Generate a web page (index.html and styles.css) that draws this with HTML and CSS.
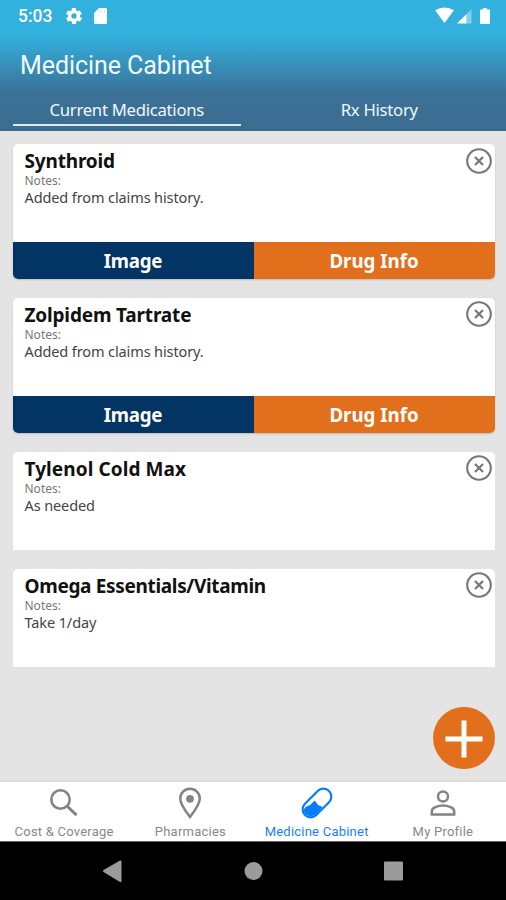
FILE: index.html
```
<!DOCTYPE html>
<html lang="en">
<head>
<meta charset="utf-8">
<title>Medicine Cabinet</title>
<link rel="stylesheet" href="styles.css">
</head>
<body>
<svg class="defs" width="0" height="0">
  <symbol id="close" viewBox="0 0 26 26"><circle cx="13" cy="13" r="11.800" fill="none" stroke="#777" stroke-width="2.100"/><path d="M9 9l8 8M17 9l-8 8" stroke="#777" stroke-width="2.200"/></symbol>
</svg>
<div class="screen">
  <header class="header">
    <div class="status">
      <span class="time">5:03</span>
      <svg class="gear" viewBox="2 2 20 20"><path fill="#fff" d="M19.4 13c0-.3.1-.6.1-1s0-.7-.1-1l2.1-1.600c.2-.2.2-.4.1-.6l-2-3.500c-.1-.2-.4-.3-.6-.2l-2.500 1c-.5-.4-1.100-.7-1.700-1l-.4-2.600c0-.3-.2-.5-.5-.5h-4c-.2 0-.5.2-.5.400l-.4 2.700c-.6.2-1.100.6-1.700 1l-2.500-1c-.2-.1-.5 0-.6.2l-2 3.500c-.1.2-.1.5.1.600L4.600 11c0 .3-.1.700-.1 1s0 .7.1 1l-2.100 1.700c-.2.2-.2.400-.1.600l2 3.500c.1.2.4.3.6.2l2.500-1c.5.4 1.100.7 1.700 1l.4 2.600c0 .2.200.4.500.4h4c.2 0 .5-.2.500-.4l.4-2.700c.6-.2 1.100-.6 1.700-1l2.500 1c.2.1.5 0 .6-.2l2-3.500c.1-.2.1-.5-.1-.6L19.400 13zM12 15.300a3.300 3.300 0 1 1 0-6.600 3.300 3.300 0 0 1 0 6.600z"/></svg>
      <svg class="sd" viewBox="0 0 13 16"><path fill="#fff" d="M5 0h6.500Q13 0 13 1.500v13q0 1.500-1.500 1.500h-10Q0 16 0 14.500V5z"/><path d="M5.500 2v2.500M8 2v2.500M10.500 2v2.500" stroke="#c2eaf6" stroke-width="1"/></svg>
      <svg class="signals" viewBox="0 0 57 18"><path fill="#fff" d="M0 3.200Q9.500-2.200 19 3.200L9.500 16z"/><path fill="#fff" d="M22 16.500 31.500 7v9.500z"/><path fill="#fff" opacity=".4" d="M31.500 7 36.500 2v14.500h-5z"/><path fill="#fff" d="M48 1h4v1.500h2q1 0 1 1V16q0 1-1 1h-8q-1 0-1-1V3.500q0-1 1-1h2z"/></svg>
    </div>
    <h1 class="title"><span>Medicine Cabinet</span></h1>
    <nav class="tabs">
      <div class="tab active"><span>Current Medications</span></div>
      <div class="tab"><span>Rx History</span></div>
    </nav>
  </header>
  <main class="list">
    <article class="card">
      <div class="info"><h2>Synthroid</h2><p class="label">Notes:</p><p class="note">Added from claims history.</p><svg class="close"><use href="#close"/></svg></div>
      <div class="actions"><div class="image">Image</div><div class="drug">Drug Info</div></div>
    </article>
    <article class="card">
      <div class="info"><h2>Zolpidem Tartrate</h2><p class="label">Notes:</p><p class="note">Added from claims history.</p><svg class="close"><use href="#close"/></svg></div>
      <div class="actions"><div class="image">Image</div><div class="drug">Drug Info</div></div>
    </article>
    <article class="card plain">
      <div class="info"><h2 class="wide">Tylenol Cold Max</h2><p class="label">Notes:</p><p class="note">As needed</p><svg class="close"><use href="#close"/></svg></div>
    </article>
    <article class="card plain">
      <div class="info"><h2 class="tight">Omega Essentials/Vitamin</h2><p class="label">Notes:</p><p class="note">Take 1/day</p><svg class="close"><use href="#close"/></svg></div>
    </article>
    <svg class="fab" viewBox="0 0 62 62"><circle cx="31" cy="31" r="31" fill="#e26f1b"/><path d="M12.500 32h37M31 13.500v37" stroke="#fff" stroke-width="5"/></svg>
  </main>
  <nav class="bottom">
    <div class="item"><svg viewBox="0 0 34 34"><g fill="none" stroke="#848484"><circle cx="13.500" cy="13.500" r="9.200" stroke-width="2.600"/><path d="M20.500 20.500l9 8.700" stroke-width="3"/></g></svg><span>Cost &amp; Coverage</span></div>
    <div class="item"><svg viewBox="0 0 34 34"><path fill="none" stroke="#848484" stroke-width="2.500" d="M17 31C12.500 25 7.200 18.500 7.200 12.500a9.800 9.800 0 0 1 19.600 0C26.800 18.500 21.500 25 17 31z"/><circle cx="17" cy="12.800" r="3.900" fill="#848484"/></svg><span>Pharmacies</span></div>
    <div class="item selected"><svg viewBox="0 0 34 34"><rect x="9" y="0" width="16" height="34" rx="8" fill="#fff" stroke="#087cf8" stroke-width="2.200" transform="rotate(45 17 17)"/><path fill="#087cf8" d="M6 20.800l4-1.800 4.800-4.500 3.200 4.500 4.500 2-5.200 6.300A8 8 0 0 1 5.500 28C2.800 25 4 22 6 20.800z"/></svg><span>Medicine Cabinet</span></div>
    <div class="item"><svg viewBox="0 0 34 34"><g fill="none" stroke="#848484" stroke-width="2.500"><circle cx="17" cy="10.500" r="5"/><path d="M5.800 28.500v-3.300C5.800 21.500 13 19.500 17 19.500s11.200 2 11.200 5.700v3.300z"/></g></svg><span>My Profile</span></div>
  </nav>
  <footer class="system">
    <svg viewBox="0 0 506 58"><g fill="#9b9b9b"><path d="M103.500 28q-1 1 0 2l16.500 10q1.500.5 1.500-1V19.500q0-1.500-1.500-1z"/><circle cx="253.500" cy="29" r="9"/><rect x="384" y="19.500" width="19" height="19" rx="1"/></g></svg>
  </footer>
</div>
</body>
</html>
```
FILE: styles.css
```
* { box-sizing: border-box; }
body, h1, h2, p { margin: 0; }
body { font-family: "Noto Sans", "Open Sans", sans-serif; background: #e4e4e4; }
.defs { position: absolute; }
.screen { display: flex; flex-direction: column; width: 506px; height: 900px; overflow: hidden; }
.header { height: 131px; color: #eefaff; background: linear-gradient(#32b0de 0, #32b0de 36px, #3793bd 62px, #3c7096 94px, #3b6d91 130px); }
.status { display: flex; align-items: center; height: 32px; padding: 0 14px 0 18px; }
.time { width: 48px; font: 500 17.500px/32px Roboto, sans-serif; color: #fff; }
.gear { width: 16px; height: 16px; }
.sd { width: 13px; height: 16px; margin-left: 12px; }
.signals { width: 57px; height: 18px; margin-left: auto; }
.title { height: 64px; padding: 1px 0 0 20px; font: 400 25px/66px Roboto, sans-serif; letter-spacing: -0.080px; }
.tabs { display: grid; grid-template-columns: 1fr 1fr; height: 35px; padding-left: 13px; padding-right: 13px; column-gap: 25px; }
.tab { height: 30px; font-size: 16.700px; line-height: 28px; letter-spacing: -0.270px; text-align: center; }
.active { border-bottom: 2px solid #d8e9f2; }
.list { position: relative; display: flex; flex-direction: column; gap: 19px; height: 651px; padding: 13px 11.500px 0 12.500px; border-bottom: 2px solid #dcdcdc; }
.card { flex: none; border-radius: 5px; overflow: hidden; background: #fff; box-shadow: 0 1px 2px #bbb; }
.plain { border-radius: 5px 5px 0 0; box-shadow: none; }
.info { position: relative; height: 98.300px; padding: 5px 12px; }
h2 { font-size: 19px; line-height: 25px; letter-spacing: -0.170px; color: #111; white-space: nowrap; }
.wide { letter-spacing: 0.080px; }
.tight { letter-spacing: -0.330px; }
.label { font-size: 12px; line-height: 14px; color: #777; }
.note { font-size: 14.500px; line-height: 18px; letter-spacing: -0.110px; color: #444; }
.close { position: absolute; top: 3.500px; right: 2.500px; width: 26px; height: 26px; }
.actions { display: grid; grid-template-columns: 1fr 1fr; height: 36.500px; color: #fff; font-size: 18.700px; font-weight: 700; line-height: 37px; text-align: center; }
.image { background: #023563; letter-spacing: -0.200px; }
.drug { background: #e26f1b; }
.fab { position: absolute; left: 433px; top: 576px; width: 62px; height: 62px; }
.bottom { display: grid; grid-template-columns: repeat(4, 1fr); height: 60px; padding-left: 1px; background: #fff; border-bottom: 1px solid #666; }
.item { display: flex; flex-direction: column; align-items: center; padding-top: 4px; font: 13px/19px Roboto, sans-serif; letter-spacing: 0.230px; color: #888; white-space: nowrap; }
.item svg { width: 34px; height: 34px; margin-bottom: 2px; }
.selected { color: #1680fa; }
.system { height: 58px; background: #000; }
.system svg { display: block; width: 506px; height: 58px; }
```
